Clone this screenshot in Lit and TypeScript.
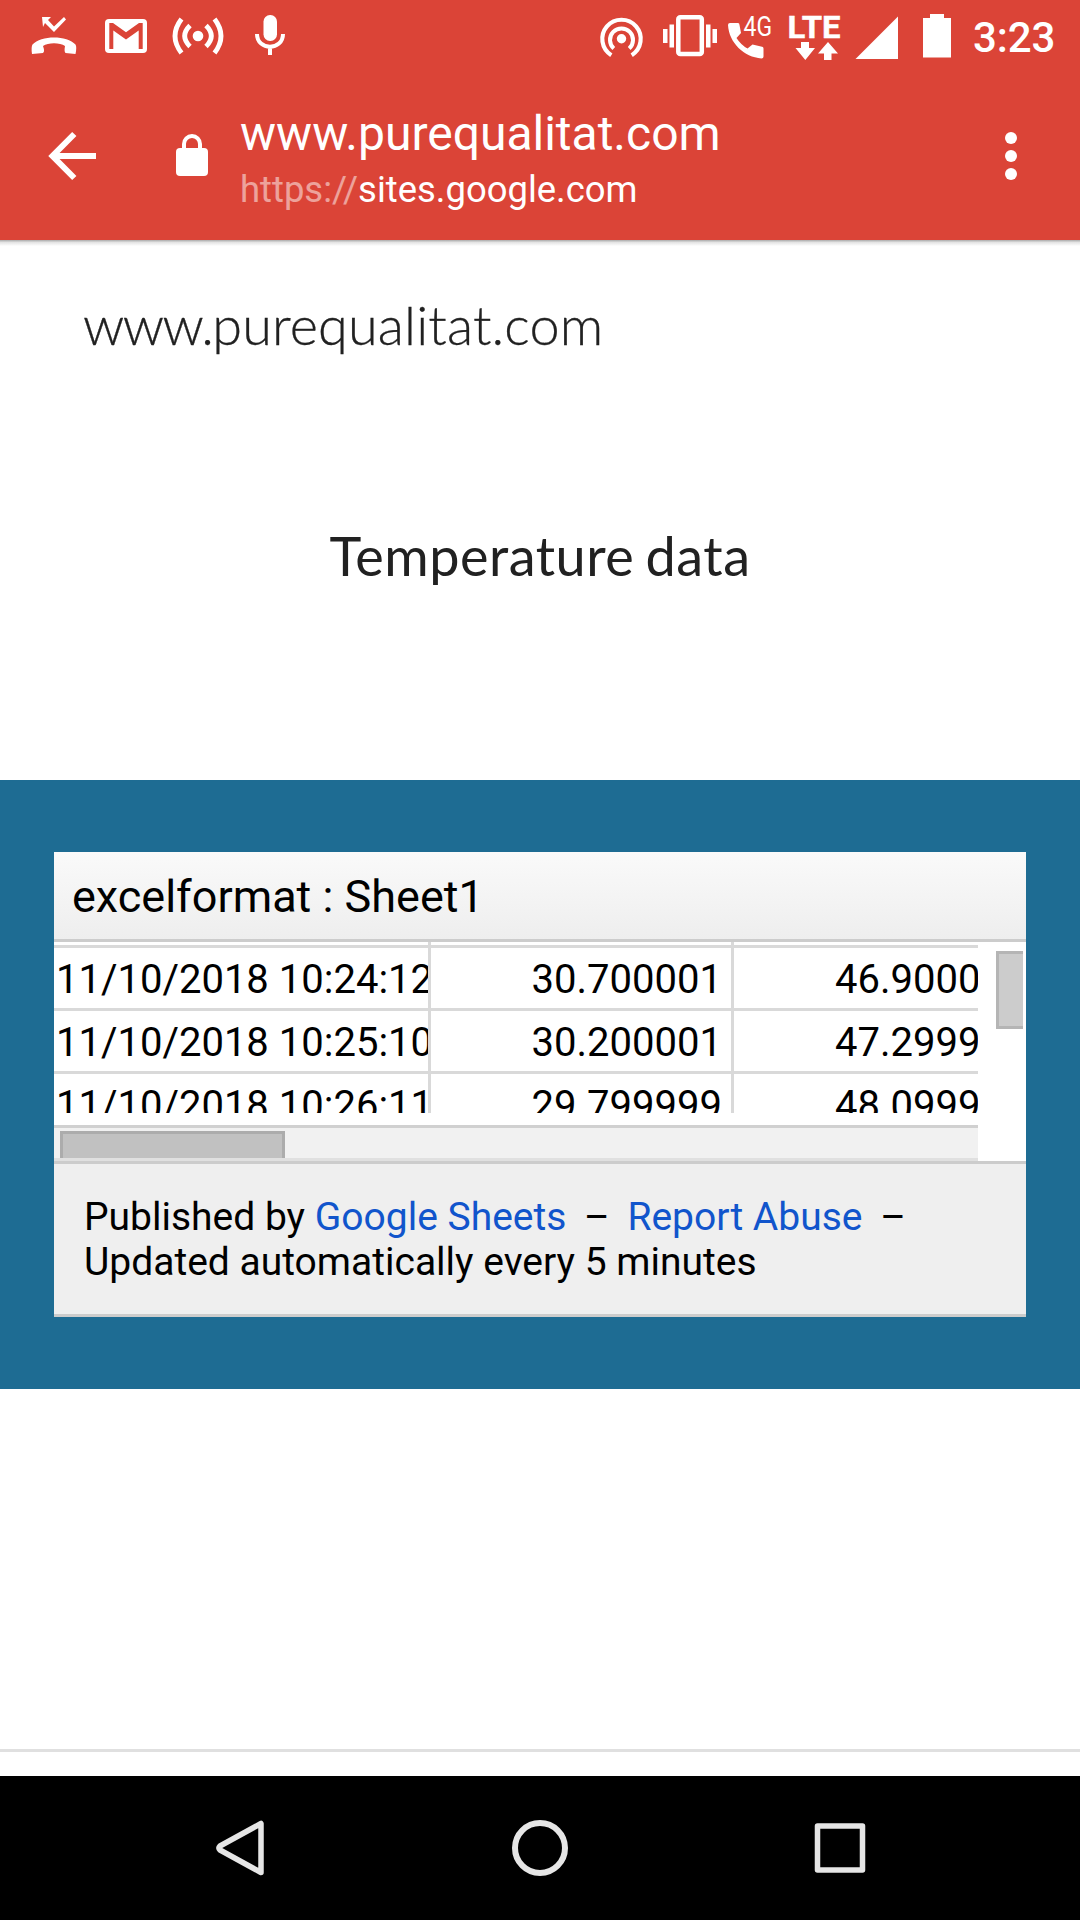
import { LitElement, html, css, svg } from "lit";
import { customElement } from "lit/decorators.js";

const rows = [
  ["11/10/2018 10:24:12", "30.700001", "46.9000"],
  ["11/10/2018 10:25:10", "30.200001", "47.2999"],
  ["11/10/2018 10:26:11", "29.799999", "48.0999"],
];

@customElement("status-bar")
class StatusBar extends LitElement {
  static styles = css`
    :host { display: flex; height: 72px; justify-content: space-between; font-family: Roboto, sans-serif; color: #fff; }
    .icons { display: block; flex: none; }
    .right { display: flex; }
    .clock { width: 107px; box-sizing: border-box; font-size: 42px; line-height: 76px; font-weight: 500; letter-spacing: -0.1px; white-space: nowrap; }
    .net { font: 400 27px/1 Roboto, sans-serif; }
    .lte { font: 700 31.500px/1 Roboto, sans-serif; stroke: #fff; stroke-width: 0.4px; }
  `;
  render() {
    return html`
      <svg class="icons" width="320" height="72" viewBox="0 0 320 72" fill="#fff">
        <path d="M32 54 Q31 47 32.500 44.500 C41 35 67 35 75.500 44.500 Q77 47 75.500 54 L65.500 53 Q64 51.500 65 46 C60 42.300 48 42.300 43 46 Q45 51.500 43 53 Z"/>
        <path d="M42 17 H51 L48 20 L54 26.500 L64 17 L66 19.500 L54 32 L45 23 L43 27 Z"/>
        <rect x="105" y="19" width="42" height="34" rx="4"/>
        <path d="M109.300 23 H113 L126 32.300 L139 23 H142.700 V49 H138.700 V30.500 L126 39.500 L113.300 30.500 V49 H109.300 Z" fill="#db4437"/>
        <circle cx="198" cy="36" r="5.300"/>
        <g fill="none" stroke="#fff" stroke-width="4.800">
          <path d="M190 25.500 Q179.500 36 190 46.500 M206 25.500 Q216.500 36 206 46.500"/>
          <path d="M181.500 19 Q168.500 36 181.500 53 M214.500 19 Q227.500 36 214.500 53"/>
        </g>
        <rect x="263.500" y="15" width="13.500" height="26" rx="6.500"/>
        <path d="M257 34 C257 51 283 51 283 34 M270 46 V55" fill="none" stroke="#fff" stroke-width="4"/>
      </svg>
      <div class="right">
        <svg class="icons" width="393" height="72" viewBox="580 0 393 72" fill="#fff">
          <circle cx="621.500" cy="38.700" r="4.700"/>
          <g fill="none" stroke="#fff">
            <path d="M613.800 48.500 A11.500 11.500 0 1 1 629.200 48.500" stroke-width="4"/>
            <path d="M611.300 55.200 A19.200 19.200 0 1 1 631.700 55.200" stroke-width="4.200"/>
            <rect x="678.300" y="17.300" width="23.500" height="36.700" rx="2" stroke-width="4.500"/>
          </g>
          <rect x="663" y="29" width="4.500" height="14"/><rect x="669.500" y="24.500" width="4.500" height="23"/>
          <rect x="706" y="24.500" width="4.500" height="23"/><rect x="712.500" y="29" width="4.500" height="14"/>
          <path d="M730 23 H738 Q739.500 23 739.500 25 L741 33 L736.500 38 Q741 45 747.500 48.500 L752.500 44.500 L761 46.500 Q763.500 46.500 763.500 48.500 V56.500 Q763.500 58.500 761.500 58.500 C744 57 729 43 728 25 Q728 23 730 23 Z"/>
          <text class="net" x="743.500" y="36" textLength="28.500" lengthAdjust="spacingAndGlyphs">4G</text>
          <text class="lte" x="787.500" y="37.700" textLength="53" lengthAdjust="spacingAndGlyphs">LTE</text>
          <path d="M801 42 H809 V48 H815 L805.300 60 L795.500 48 H801 Z M828 42 L838 53.500 H831.500 V60 H824 V53.500 H818 Z"/>
          <path d="M898 16.500 V59 H855.500 Z"/>
          <path d="M930 14 H944 V18 H951 V57.500 H923 V18 H930 Z"/>
        </svg>
        <span class="clock">3:23</span>
      </div>`;
  }
}

@customElement("browser-bar")
class BrowserBar extends LitElement {
  static styles = css`
    :host { display: grid; grid-template-columns: 240px 1fr 138px; height: 168px; color: #fff; font-family: Roboto, sans-serif; }
    .icon { display: block; }
    .address { padding-top: 33px; white-space: nowrap; }
    .title { font-size: 48px; line-height: 58px; }
    .url { font-size: 36.450px; line-height: 42px; padding-top: 6px; }
    .scheme { opacity: 0.5; }
  `;
  render() {
    return html`
      <svg class="icon" width="240" height="168" viewBox="0 72 240 168">
        <path d="M74.300 134 L52.500 156 L74.300 178 M53 156 H96" fill="none" stroke="#fff" stroke-width="6"/>
        <rect x="176" y="148" width="32" height="28" rx="4" fill="#fff"/>
        <path d="M184 150 V144 A8 8 0 0 1 200 144 V150" fill="none" stroke="#fff" stroke-width="4"/>
      </svg>
      <div class="address">
        <div class="title">www.purequalitat.com</div>
        <div class="url"><span class="scheme">https://</span>sites.google.com</div>
      </div>
      <svg class="icon" width="138" height="168" viewBox="942 72 138 168" fill="#fff">
        <circle cx="1011" cy="138" r="6"/><circle cx="1011" cy="156" r="6"/><circle cx="1011" cy="174" r="6"/>
      </svg>`;
  }
}

@customElement("sheet-embed")
class SheetEmbed extends LitElement {
  static styles = css`
    :host { display: block; background: #efefef; font-family: Roboto, sans-serif; color: #000; }
    .head { height: 87px; padding-left: 18px; border-bottom: 3px solid #ccc; background: linear-gradient(#fafafa, #eee); font-size: 45px; line-height: 90px; }
    .body { display: grid; grid-template-columns: 924px 48px; height: 219px; background: #fff; }
    .grid { height: 171px; overflow: hidden; }
    .row { display: grid; grid-template-columns: 377px 303px 244px; height: 63px; font-size: 40px; line-height: 64px; }
    .row.first { height: 6px; }
    .cell { box-sizing: border-box; border-right: 3px solid #d9d9d9; border-bottom: 3px solid #d9d9d9; overflow: hidden; white-space: nowrap; padding: 0 0 0 2px; }
    .cell.num { text-align: right; padding-right: 9px; }
    .cell.last { text-align: left; padding: 0 0 0 101px; border-right: 0; }
    .htrack { box-sizing: border-box; height: 36px; margin-top: 12px; padding: 3px 6px 0; background: #f1f1f1; border-top: 3px solid #d0d0d0; border-bottom: 3px solid #e0e0e0; }
    .hthumb { box-sizing: border-box; width: 225px; height: 27px; background: #c1c1c1; border: 3px solid #acacac; border-bottom: 0; }
    .vthumb { box-sizing: border-box; width: 27px; height: 78px; margin: 9px 0 0 18px; background: #ccc; border: 3px solid #b5b5b5; border-right: 0; }
    .foot { box-sizing: border-box; height: 156px; border-top: 3px solid #ccc; border-bottom: 3px solid #ccc; padding: 31px 30px 0; font-size: 39px; line-height: 45px; white-space: nowrap; }
    .link { color: #15c; }
    .dash { margin: 0 8px; }
  `;
  render() {
    return html`
      <div class="head">excelformat : Sheet1</div>
      <div class="body">
        <div>
          <div class="grid">
            <div class="row first"><div class="cell"></div><div class="cell"></div><div class="cell last"></div></div>
            ${rows.map(([a, b, c]) => html`<div class="row"><div class="cell">${a}</div><div class="cell num">${b}</div><div class="cell last">${c}</div></div>`)}
          </div>
          <div class="htrack"><div class="hthumb"></div></div>
        </div>
        <div><div class="vthumb"></div></div>
      </div>
      <div class="foot">
        <div>Published by <span class="link">Google Sheets</span> <span class="dash">–</span> <span class="link">Report Abuse</span> <span class="dash">–</span></div>
        <div>Updated automatically every 5 minutes</div>
      </div>`;
  }
}

@customElement("app-root")
class AppRoot extends LitElement {
  static styles = css`
    :host { display: flex; flex-direction: column; width: 1080px; height: 1920px; overflow: hidden; background: #fff; font-family: Lato, sans-serif; color: #212121; }
    .top { flex: none; height: 240px; background: #db4437; }
    .shade { flex: none; height: 6px; background: linear-gradient(#aaa, #e4e4e4 40%, #fff); }
    .site { height: 162px; flex: none; padding: 49px 83px 0; font-size: 54px; line-height: 60px; font-weight: 300; box-sizing: border-box; letter-spacing: 0.15px; -webkit-text-stroke: 0.3px #212121; }
    .www { letter-spacing: -1.500px; }
    .heading { height: 372px; flex: none; box-sizing: border-box; padding-top: 118px; text-align: center; font-size: 54px; line-height: 60px; letter-spacing: 0.500px; word-spacing: -3px; }
    .band { flex: none; height: 609px; box-sizing: border-box; padding: 72px 54px; background: #1e6c93; }
    .rest { flex: none; height: 360px; border-bottom: 3px solid #e0e0e0; }
    .gap { flex: none; height: 24px; }
    .nav { flex: none; display: block; background: #000; }
  `;
  render() {
    return html`
      <div class="top"><status-bar></status-bar><browser-bar></browser-bar></div>
      <div class="shade"></div>
      <div class="site"><span class="www">www.</span>purequalitat.com</div>
      <div class="heading">Temperature data</div>
      <div class="band"><sheet-embed></sheet-embed></div>
      <div class="rest"></div>
      <div class="gap"></div>
      <svg class="nav" width="1080" height="144" viewBox="0 1776 1080 144" fill="none" stroke="#e6e6e6" stroke-linejoin="round">
        ${svg`<path d="M261 1823.500 V1872.500 L220 1850 Q218 1848 220 1846 Z" stroke-width="5.500"/>
        <circle cx="540" cy="1848" r="25" stroke-width="6"/>
        <rect x="817.500" y="1826" width="45" height="44" stroke-width="5.500"/>`}
      </svg>`;
  }
}
